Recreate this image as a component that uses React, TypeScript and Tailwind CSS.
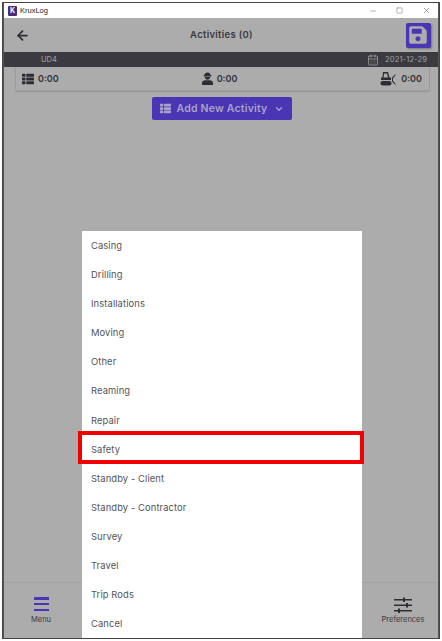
import { ArrowLeft, CalendarDays, ChevronDown, Minus, Square, X } from "lucide-react";
import { FaSave, FaThList } from "react-icons/fa";

const activities = [
  "Casing",
  "Drilling",
  "Installations",
  "Moving",
  "Other",
  "Reaming",
  "Repair",
  "Safety",
  "Standby - Client",
  "Standby - Contractor",
  "Survey",
  "Travel",
  "Trip Rods",
  "Cancel",
];

function WorkerIcon() {
  return (
    <svg width="11" height="13" viewBox="0 0 11 13" fill="#2e2d33">
      <path d="M2.2 3.6C2.2 1.8 3.5.4 5.5.4s3.3 1.4 3.3 3.2h.7v.9h-8v-.9z" />
      <path d="M2.9 5.1h5.2c0 1.6-1.1 2.6-2.6 2.6S2.900 6.700 2.900 5.100z" />
      <path d="M0 13v-1.700C0 9.600 1.500 8.300 3.200 8.300h4.600c1.700 0 3.200 1.300 3.200 3V13z" />
    </svg>
  );
}

function DrillIcon() {
  return (
    <svg width="16" height="14" viewBox="0 0 16 14" fill="#2e2d33">
      <path d="M3 0h5l1.500 5.500H11V8H1V5.500h1.500zM4.200 1.400 3.600 5.500h4.400L7 1.400z" fillRule="evenodd" />
      <rect x="0.5" y="9" width="11" height="4.600" rx="2.300" />
      <path d="M12 5.500 15.500 2v1.200L13 6.200v2.600l2.500 3v1.200L12 9.500z" />
    </svg>
  );
}

function SlidersIcon() {
  return (
    <svg width="18" height="16" viewBox="0 0 18 16" fill="#2e2d33">
      <rect y="2" width="18" height="1.500" />
      <rect x="9" y="0.500" width="2" height="4.500" />
      <rect y="7.500" width="18" height="1.500" />
      <rect x="12" y="6" width="2" height="4.500" />
      <rect y="13" width="18" height="1.500" />
      <rect x="4" y="11.500" width="2" height="4.500" />
    </svg>
  );
}

export default function App() {
  return (
    <div className="w-[442px] h-[641px] bg-white p-[3px] font-['Inter',sans-serif]">
      <div className="relative w-full h-full flex flex-col border-l border-r border-[#55555a] outline outline-1 outline-[#444]">
        {/* Title bar */}
        <div className="h-[15px] bg-white flex items-center pl-[4px] pr-[7px] shrink-0">
          <div className="w-[9px] h-[10px] bg-[#4f2a78] rounded-[1px] flex items-center justify-center text-white text-[7px] font-bold leading-none">
            K
          </div>
          <span className="ml-[3px] text-[7.5px] text-[#222] font-['Liberation_Sans',sans-serif]">KruxLog</span>
          <div className="ml-auto flex items-center gap-[19px] text-[#333]">
            <Minus size={8} strokeWidth={1.2} />
            <Square size={7} strokeWidth={1.2} />
            <X size={9} strokeWidth={1.2} />
          </div>
        </div>

        {/* App body, dimmed */}
        <div className="flex-1 flex flex-col bg-[#acacac] min-h-0">
          <div className="h-[34px] shrink-0 flex items-center justify-between pl-[11px] pr-[7px]">
            <ArrowLeft size={15} strokeWidth={2.8} color="#2e2d33" />
            <span className="ml-[7px] mt-[1px] text-[9.5px] font-semibold text-[#3a393f] tracking-[0.3px]">Activities (0)</span>
            <div className="w-[25px] h-[25px] bg-[#4a35b5] rounded-[2px] flex items-center justify-center shadow-[1px_1px_2px_rgba(0,0,0,0.3)]">
              <FaSave size={20} color="#acacac" />
            </div>
          </div>

          <div className="h-[15px] shrink-0 bg-[#3b3a40] flex items-center pl-[37px] pr-[11px] text-[7.5px] text-[#a3a3a3]">
            <span>UD4</span>
            <CalendarDays size={12} strokeWidth={1.5} className="ml-auto mr-[6px]" />
            <span className="tracking-[0.15px]">2021-12-29</span>
          </div>

          <div className="h-[24px] shrink-0 ml-[11px] mr-[8px] flex items-center justify-between pl-[6px] pr-[7px] border border-t-0 border-[#9c9c9c] rounded-b-[2px] shadow-[0_1px_1px_rgba(0,0,0,0.12)] text-[9px] font-semibold text-[#333238]">
            <span className="flex items-center gap-[4px]">
              <FaThList size={12} color="#2e2d33" />
              0:00
            </span>
            <span className="flex items-center gap-[4px]">
              <WorkerIcon />
              0:00
            </span>
            <span className="flex items-center gap-[5px]">
              <DrillIcon />
              0:00
            </span>
          </div>

          <div className="flex justify-center mt-[6px] ml-[2px]">
            <div className="h-[23px] w-[140px] bg-[#4a35b5] rounded-[2px] flex items-center justify-center gap-[6px] text-[10.5px] font-semibold text-[#a9a3c9] tracking-[0.2px]">
              <FaThList size={11} />
              Add New Activity
              <ChevronDown size={10} strokeWidth={3} className="ml-[1px]" />
            </div>
          </div>

          {/* Bottom navigation */}
          <div className="mt-auto h-[56px] shrink-0 border-t border-[#a2a2a2] flex justify-between pl-[14px] pr-[12px] pt-[14px]">
            <div className="w-[46px] flex flex-col items-center gap-[3px] text-[7.5px] text-[#3a393f]">
              <div className="w-[15px] h-[14px] flex flex-col justify-between">
                <div className="h-[2.5px] bg-[#4a35b5]" />
                <div className="h-[2.5px] bg-[#4a35b5]" />
                <div className="h-[2.5px] bg-[#4a35b5]" />
              </div>
              Menu
            </div>
            <div className="w-[46px] flex flex-col items-center gap-[1px] text-[7.5px] text-[#3a393f]">
              <SlidersIcon />
              Preferences
            </div>
          </div>
        </div>

        {/* Activity picker sheet */}
        <div className="absolute left-[78px] right-[76px] top-[228px] bottom-0 bg-white flex flex-col">
          {activities.map((a) => (
            <div key={a} className="relative h-[29.1px] shrink-0 flex items-center pl-[9px] pt-[1px] text-[9.4px] text-[#555459] tracking-[0.1px]">
              {a}
              {a === "Safety" && (
                <div className="absolute left-[-4px] right-[-2px] top-[-4px] bottom-0 border-4 border-[#f00000]" />
              )}
            </div>
          ))}
        </div>
      </div>
    </div>
  );
}
